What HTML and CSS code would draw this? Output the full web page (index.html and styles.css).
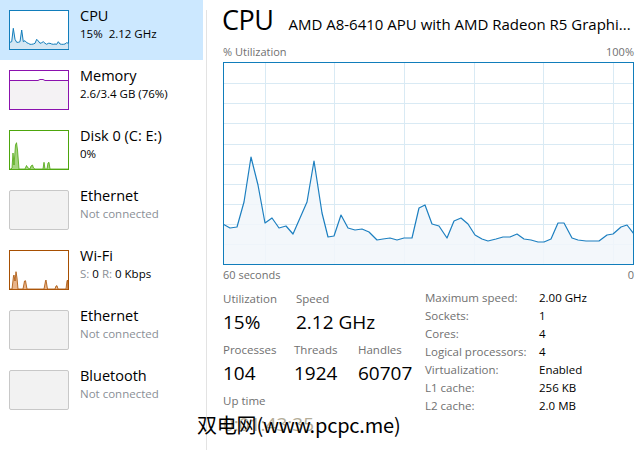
FILE: index.html
```html
<!DOCTYPE html>
<html lang="en">
<head>
  <meta charset="UTF-8" />
  <title>Task Manager - Performance</title>
  <link rel="stylesheet" href="styles.css">
</head>
<body>

  <div class="app">
    <ul class="side">
      <li class="item selected">
        <svg class="thumb" viewBox="9 10 60 40" width="60" height="40">
          <rect x="9.5" y="10.5" width="59" height="39" fill="#fff" stroke="#117dbb" />
          <polygon fill="#d5e7f3" points="10,42.3 11.7,41.7 13.3,28.3 15,39.3 16.7,42.3 18.3,42.3 20,41.7 21.7,30 23.3,41.7 25,40.7 26.7,42.7 28.3,43.3 30,44.3 31.7,44.3 33.3,44 35,43.3 36.7,39.3 38.3,41 40,43.3 41.7,42.7 43.3,41.7 45,43.3 46.7,44.3 48.3,43.3 50,43.3 51.7,44 53.3,44.3 55,44 56.7,44.3 58.3,41.7 60,44 61.7,44.3 63.3,44.3 65,44 66.7,42.7 68.3,43.3 68.3,49 10,49" />
          <polyline fill="none" stroke="#117dbb" stroke-width="1" points="10,42.3 11.7,41.7 13.3,28.3 15,39.3 16.7,42.3 18.3,42.3 20,41.7 21.7,30 23.3,41.7 25,40.7 26.7,42.7 28.3,43.3 30,44.3 31.7,44.3 33.3,44 35,43.3 36.7,39.3 38.3,41 40,43.3 41.7,42.7 43.3,41.7 45,43.3 46.7,44.3 48.3,43.3 50,43.3 51.7,44 53.3,44.3 55,44 56.7,44.3 58.3,41.7 60,44 61.7,44.3 63.3,44.3 65,44 66.7,42.7 68.3,43.3" />
        </svg>
        <div class="info">
          <div class="name">CPU</div>
          <div class="sub">15%&nbsp; 2.12 GHz</div>
        </div>
      </li>
      <li class="item">
        <svg class="thumb" viewBox="9 70 60 40" width="60" height="40">
          <rect x="9.5" y="70.5" width="59" height="39" fill="#fff" stroke="#8b12ae" />
          <rect x="10" y="80" width="58" height="29" fill="#f4f2f4" />
          <polyline fill="none" stroke="#8b12ae" points="10,80.5 38,80.5 40,79.5 43,79.5 45,80.5 68,80.5" />
        </svg>
        <div class="info">
          <div class="name">Memory</div>
          <div class="sub">2.6/3.4 GB (76%)</div>
        </div>
      </li>
      <li class="item">
        <svg class="thumb" viewBox="9 130 60 40" width="60" height="40">
          <rect x="9.5" y="130.5" width="59" height="39" fill="#fff" stroke="#4da60c" />
          <polygon fill="#a5d47f" stroke="#4da60c" stroke-width="0.8" points="10,169 11,169 12,168 13,153 14,165 15.5,145 16.5,142.7 17.5,150 19,169 25,169 26.5,165.5 28,168 30,169 31,166 32.5,165 33.5,168 35,169 43,169 44,162.3 45,169 47,169 48,163 49,162.3 50,169 60,169 68,169 68,169.5 10,169.5" />
        </svg>
        <div class="info">
          <div class="name">Disk 0 (C: E:)</div>
          <div class="sub">0%</div>
        </div>
      </li>
      <li class="item">
        <div class="thumb empty"></div>
        <div class="info">
          <div class="name">Ethernet</div>
          <div class="sub muted">Not connected</div>
        </div>
      </li>
      <li class="item">
        <svg class="thumb" viewBox="9 250 60 40" width="60" height="40">
          <rect x="9.5" y="250.5" width="59" height="39" fill="#fff" stroke="#a74f01" />
          <polygon fill="#e8b48a" stroke="#a74f01" stroke-width="0.8" points="10,289 12,289 13.5,276 14,275 15,281 16,271.7 17,278 18,289 23,289 24.5,281 25.5,280.7 27,289 44,289 45.5,281 46,280 47.5,289 55,289 56,286 57,285.7 58,289 66,289 67,281 67.5,280 68,289 68,289.5 10,289.5" />
        </svg>
        <div class="info">
          <div class="name">Wi-Fi</div>
          <div class="sub"><span class="muted">S:</span> 0 <span class="muted">R:</span> 0 Kbps</div>
        </div>
      </li>
      <li class="item">
        <div class="thumb empty"></div>
        <div class="info">
          <div class="name">Ethernet</div>
          <div class="sub muted">Not connected</div>
        </div>
      </li>
      <li class="item">
        <div class="thumb empty"></div>
        <div class="info">
          <div class="name">Bluetooth</div>
          <div class="sub muted">Not connected</div>
        </div>
      </li>
    </ul>

    <div class="divider"></div>

    <main class="panel">
      <header class="head">
        <h1>CPU</h1>
        <span class="model">AMD A8-6410 APU with AMD Radeon R5 Graphi...</span>
      </header>

      <div class="axis"><span>% Utilization</span><span>100%</span></div>

      <div class="chart">
        <svg viewBox="224 63 409 201" width="409" height="201">
          <g stroke="#d9eaf4" stroke-width="1">
            <line x1="224" x2="633" y1="83.5" y2="83.5" />
            <line x1="224" x2="633" y1="103.5" y2="103.5" />
            <line x1="224" x2="633" y1="123.5" y2="123.5" />
            <line x1="224" x2="633" y1="144.5" y2="144.5" />
            <line x1="224" x2="633" y1="164.5" y2="164.5" />
            <line x1="224" x2="633" y1="184.5" y2="184.5" />
            <line x1="224" x2="633" y1="204.5" y2="204.5" />
            <line x1="224" x2="633" y1="224.5" y2="224.5" />
            <line x1="224" x2="633" y1="244.5" y2="244.5" />
            <line y1="63" y2="264" x1="265.5" x2="265.5" />
            <line y1="63" y2="264" x1="334.5" x2="334.5" />
            <line y1="63" y2="264" x1="404.5" x2="404.5" />
            <line y1="63" y2="264" x1="474.5" x2="474.5" />
            <line y1="63" y2="264" x1="543.5" x2="543.5" />
            <line y1="63" y2="264" x1="613.5" x2="613.5" />
          </g>
          <polygon fill="#f1f6fa" fill-opacity="0.85" points="223,224 230,228 237,227 244,202 251,157 258,185 265,223 272,218 279,228 286,226 293,234 300,218 307,202 314,161 322,213 328,237 334,236 341,215 348,228 355,230 362,229 369,232 377,240 383,239 390,238 397,240 404,238 412,238 419,208 425,205 432,224 439,226 447,238 454,221 461,218 468,224 475,235 482,239 488,241 496,239 503,237 510,237 517,234 524,239 531,240 538,242 544,242 551,239 558,223 564,223 572,238 578,240 586,241 592,241 599,241 607,235 613,234 621,227 627,225 634,234 634,265 223,265" />
          <polyline fill="none" stroke="#1c7fc0" stroke-width="1.2" stroke-linejoin="round" points="223,224 230,228 237,227 244,202 251,157 258,185 265,223 272,218 279,228 286,226 293,234 300,218 307,202 314,161 322,213 328,237 334,236 341,215 348,228 355,230 362,229 369,232 377,240 383,239 390,238 397,240 404,238 412,238 419,208 425,205 432,224 439,226 447,238 454,221 461,218 468,224 475,235 482,239 488,241 496,239 503,237 510,237 517,234 524,239 531,240 538,242 544,242 551,239 558,223 564,223 572,238 578,240 586,241 592,241 599,241 607,235 613,234 621,227 627,225 634,234" />
        </svg>
      </div>

      <div class="axis"><span>60 seconds</span><span>0</span></div>

      <section class="stats">
        <div class="live">
          <div class="row">
            <div class="stat w73"><div class="label">Utilization</div><div class="value">15%</div></div>
            <div class="stat"><div class="label">Speed</div><div class="value">2.12 GHz</div></div>
          </div>
          <div class="row">
            <div class="stat w71"><div class="label">Processes</div><div class="value">104</div></div>
            <div class="stat w64"><div class="label">Threads</div><div class="value">1924</div></div>
            <div class="stat"><div class="label">Handles</div><div class="value">60707</div></div>
          </div>
          <div class="row">
            <div class="stat"><div class="label">Up time</div><div class="value faded">0:01:43:35</div></div>
          </div>
        </div>

        <dl class="specs">
          <dt>Maximum speed:</dt><dd>2.00 GHz</dd>
          <dt>Sockets:</dt><dd>1</dd>
          <dt>Cores:</dt><dd>4</dd>
          <dt>Logical processors:</dt><dd>4</dd>
          <dt>Virtualization:</dt><dd>Enabled</dd>
          <dt>L1 cache:</dt><dd>256 KB</dd>
          <dt>L2 cache:</dt><dd>2.0 MB</dd>
        </dl>
      </section>
    </main>
  </div>

  <div class="watermark">双电网(www.pcpc.me)</div>

</body>
</html>
```

FILE: styles.css
```css
html, body {
  margin: 0;
  background: #fff;
}
body {
  width: 640px;
  height: 450px;
  overflow: hidden;
  position: relative;
  font-family: 'Open Sans', 'Noto Sans', sans-serif;
  color: #000;
}
.app {
  display: flex;
  height: 450px;
}
.side {
  list-style: none;
  margin: 0;
  padding: 0;
  width: 203px;
}
.item {
  display: flex;
  align-items: flex-start;
  height: 60px;
  box-sizing: border-box;
  padding: 10px 0 0 9px;
  gap: 11px;
}
.item.selected {
  background: #cce8ff;
}
.thumb {
  display: block;
  flex: none;
  width: 60px;
  height: 40px;
}
.thumb.empty {
  box-sizing: border-box;
  background: #f2f2f2;
  border: 1px solid #c8c8c8;
  border-radius: 2px;
}
.info {
  margin-top: -4px;
}
.name {
  font-size: 14.5px;
  line-height: 20px;
}
.sub {
  font-size: 11.5px;
  line-height: 15px;
}
.muted {
  color: #8a8f96;
}
.divider {
  width: 1px;
  margin: 10px 0 0 3px;
  background: #e3e3e3;
}
.panel {
  flex: 1;
  padding: 0 6px 0 16px;
}
.head {
  display: flex;
  align-items: baseline;
  gap: 15px;
  height: 42px;
}
.head h1 {
  margin: 0 0 0 -1px;
  font-weight: normal;
  font-size: 27px;
  line-height: 40px;
  letter-spacing: -0.5px;
}
.model {
  font-size: 15px;
  white-space: nowrap;
}
.axis {
  display: flex;
  justify-content: space-between;
  font-size: 11px;
  line-height: 20px;
  color: #707070;
}
.chart {
  width: 411px;
  height: 203px;
  box-sizing: border-box;
  border: 1px solid #117dbb;
}
.chart svg {
  display: block;
}
.stats {
  display: flex;
  align-items: flex-start;
  margin-top: 4px;
}
.live {
  width: 202px;
  padding-top: 2px;
}
.row {
  display: flex;
}
.stat {
  white-space: nowrap;
}
.w73 { width: 73px; }
.w71 { width: 71px; }
.w64 { width: 64px; }
.label {
  font-size: 11.5px;
  line-height: 16px;
  color: #707070;
}
.value {
  font-size: 19px;
  line-height: 30px;
  margin-bottom: 5px;
}
.value.faded {
  color: #b4ad98;
}
.specs {
  display: grid;
  grid-template-columns: 114px auto;
  align-content: start;
  margin: 0;
  font-size: 11.5px;
  line-height: 18px;
}
.specs dt {
  color: #707070;
}
.specs dd {
  margin: 0;
}
.watermark {
  position: absolute;
  left: 197px;
  top: 412px;
  font-family: 'Noto Sans CJK SC', sans-serif;
  font-size: 20px;
  line-height: 26px;
  letter-spacing: -0.2px;
  color: #000;
}
```
